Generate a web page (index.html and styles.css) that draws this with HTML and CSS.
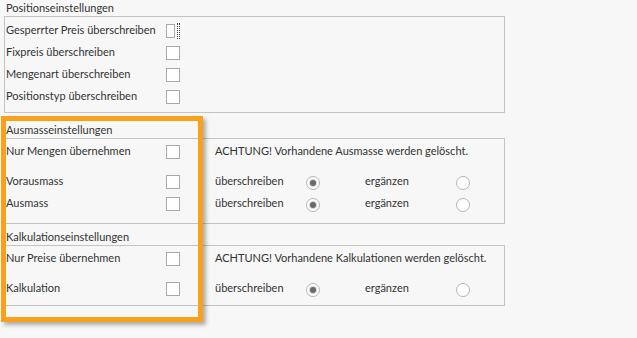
FILE: index.html
```html
<html lang="de">
	<head>
		<meta charset="UTF-8" />
		<meta name="viewport" content="width=device-width, initial-scale=1.0" />
		<title>Einstellungen</title>
		<link rel="stylesheet" href="styles.css">
	</head>
	<body>
		<div id="settings">
			<div class="section">
				<div class="section-title">Positionseinstellungen</div>
				<div class="group group-pos">
					<div class="row">
						<span class="label">Gesperrter Preis überschreiben</span>
						<span class="check-wrap"><span class="check"></span><span class="focus"></span></span>
					</div>
					<div class="row">
						<span class="label">Fixpreis überschreiben</span>
						<span class="check-wrap"><span class="check"></span></span>
					</div>
					<div class="row">
						<span class="label">Mengenart überschreiben</span>
						<span class="check-wrap"><span class="check"></span></span>
					</div>
					<div class="row">
						<span class="label">Positionstyp überschreiben</span>
						<span class="check-wrap"><span class="check"></span></span>
					</div>
				</div>
			</div>

			<div class="section section-measure">
				<div class="section-title">Ausmasseinstellungen</div>
				<div class="group group-measure">
					<div class="row row-spaced">
						<span class="label">Nur Mengen übernehmen</span>
						<span class="check"></span>
						<span class="warn">ACHTUNG! Vorhandene Ausmasse werden gelöscht.</span>
					</div>
					<div class="row">
						<span class="label">Vorausmass</span>
						<span class="check"></span>
						<span class="opt">überschreiben</span>
						<span class="radio checked"></span>
						<span class="opt opt-2">ergänzen</span>
						<span class="radio"></span>
					</div>
					<div class="row">
						<span class="label">Ausmass</span>
						<span class="check"></span>
						<span class="opt">überschreiben</span>
						<span class="radio checked"></span>
						<span class="opt opt-2">ergänzen</span>
						<span class="radio"></span>
					</div>
				</div>
			</div>

			<div class="section section-calc">
				<div class="section-title">Kalkulationseinstellungen</div>
				<div class="group group-calc">
					<div class="row row-spaced">
						<span class="label">Nur Preise übernehmen</span>
						<span class="check"></span>
						<span class="warn">ACHTUNG! Vorhandene Kalkulationen werden gelöscht.</span>
					</div>
					<div class="row">
						<span class="label">Kalkulation</span>
						<span class="check"></span>
						<span class="opt">überschreiben</span>
						<span class="radio checked"></span>
						<span class="opt opt-2">ergänzen</span>
						<span class="radio"></span>
					</div>
				</div>
			</div>

			<div class="highlight"></div>
		</div>
	</body>
</html>
```

FILE: styles.css
```css
* {
	margin: 0;
	padding: 0;
	box-sizing: border-box;
}

body {
	background-color: #f7f7f7;
	color: #333;
	font-family: Lato, "Liberation Sans", sans-serif;
	font-size: 11px;
}

#settings {
	position: relative;
	width: 637px;
	height: 338px;
}

.section-title {
	height: 16px;
	line-height: 16px;
	padding-left: 6px;
}

.section-measure {
	margin-top: 9px;
}

.section-calc {
	margin-top: 5px;
}

.group {
	margin-left: 4px;
	width: 501px;
	border: 1px solid #c3c3c3;
}

.group-pos {
	padding: 3px 0 4px;
}

.group-measure {
	padding: 2px 0 8px;
}

.group-calc {
	padding: 2px 0 5px;
}

.row {
	display: grid;
	grid-template-columns: 161px 14px 35px 91px 14px 45px 91px 14px;
	align-items: center;
	height: 22px;
}

.row-spaced {
	margin-bottom: 8px;
}

.label,
.warn,
.opt {
	padding-bottom: 4px;
	white-space: nowrap;
}

.label {
	padding-left: 1px;
}

.check-wrap {
	display: flex;
	align-items: center;
}

.check {
	width: 14px;
	height: 14px;
	background-color: #fff;
	border: 1px solid #a9a9a9;
}

.focus {
	width: 4px;
	height: 16px;
	margin-left: 2px;
	border: 1px dotted #444;
}

.warn {
	grid-column: 4 / -1;
}

.opt {
	grid-column: 4;
}

.opt-2 {
	grid-column: 7;
}

.radio {
	width: 14px;
	height: 14px;
	margin-top: 2px;
	border: 1px solid #b5b5b5;
	border-radius: 50%;
	background-color: #fff;
	display: flex;
	align-items: center;
	justify-content: center;
}

.radio.checked::after {
	content: "";
	width: 6px;
	height: 6px;
	border-radius: 50%;
	background-color: #6a6a6a;
	box-shadow: 0 0 0 1px #d8d8d8;
}

/* Hervorhebung (Screenshot-Markierung) */
.highlight {
	position: absolute;
	left: 1px;
	top: 116px;
	width: 202px;
	height: 206px;
	border: 5px solid #f9a11b;
	box-shadow: 3px 3px 4px rgba(0, 0, 0, 0.3);
}
```
